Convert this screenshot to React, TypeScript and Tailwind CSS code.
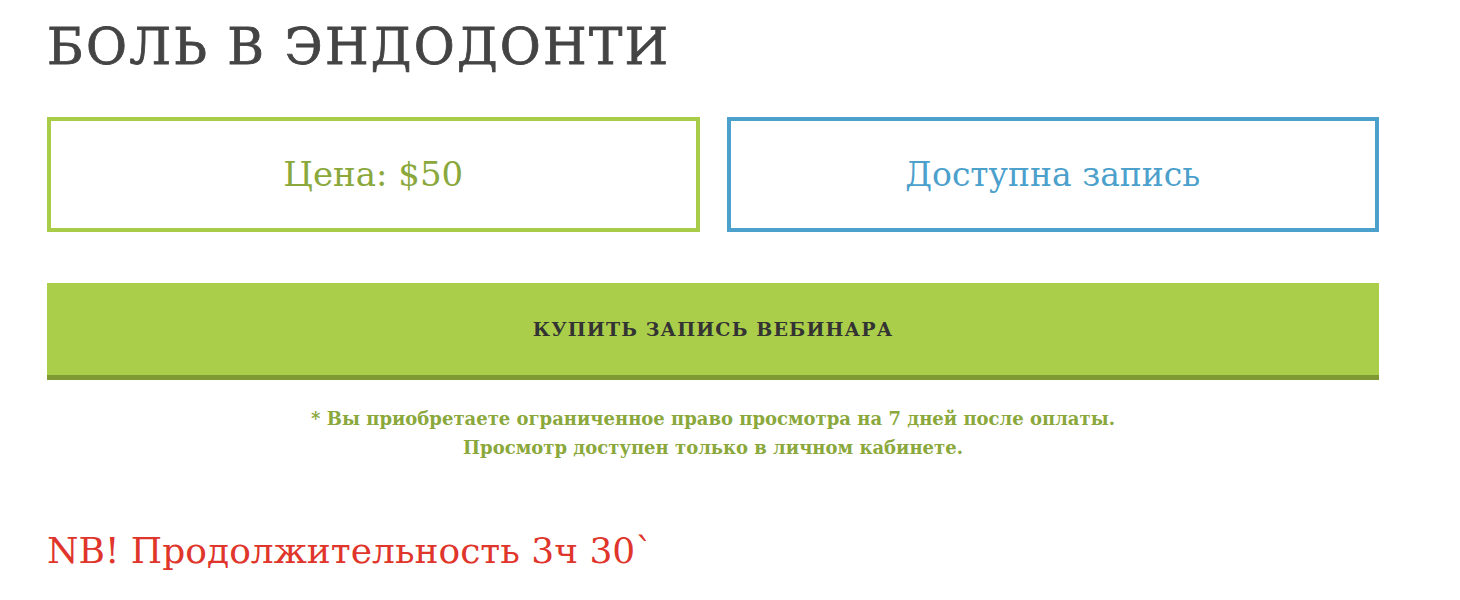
export default function App() {
  return (
    <div className="min-h-screen bg-white" style={{ fontFamily: '"DejaVu Serif", "Liberation Serif", serif' }}>
      <div className="w-[1332px] ml-[47px] flex flex-col">
        {/* Title */}
        <h1 className="mt-[16px] text-[50px] leading-[62px] tracking-[0.045em] text-[#444444] font-normal [-webkit-text-stroke:0.8px_#444444]">
          БОЛЬ В ЭНДОДОНТИ
        </h1>

        {/* Price / status */}
        <div className="mt-[39px] grid grid-cols-2 gap-[27px]">
          <div className="h-[115px] border-4 border-[#a8cc48] flex items-center justify-center">
            <span className="text-[34px] text-[#8aa83c]">Цена: $50</span>
          </div>
          <div className="h-[115px] border-4 border-[#4ba0cc] flex items-center justify-center">
            <span className="text-[33px] text-[#4ba0cc]">Доступна запись</span>
          </div>
        </div>

        {/* Buy button */}
        <button className="mt-[51px] h-[97px] bg-[#aace4a] border-b-[5px] border-[#7f9a35] flex items-center justify-center">
          <span className="text-[19px] font-bold tracking-[0.06em] text-[#333333]">КУПИТЬ ЗАПИСЬ ВЕБИНАРА</span>
        </button>

        <p className="mt-[24px] text-center text-[18px] leading-[29px] font-bold text-[#8aa83c]">
          * Вы приобретаете ограниченное право просмотра на 7 дней после оплаты.
          <br />
          Просмотр доступен только в личном кабинете.
        </p>

        <p className="mt-[66px] text-[36px] leading-[46px] text-[#e0352b]">NB! Продолжительность 3ч 30`</p>
      </div>
    </div>
  );
}
